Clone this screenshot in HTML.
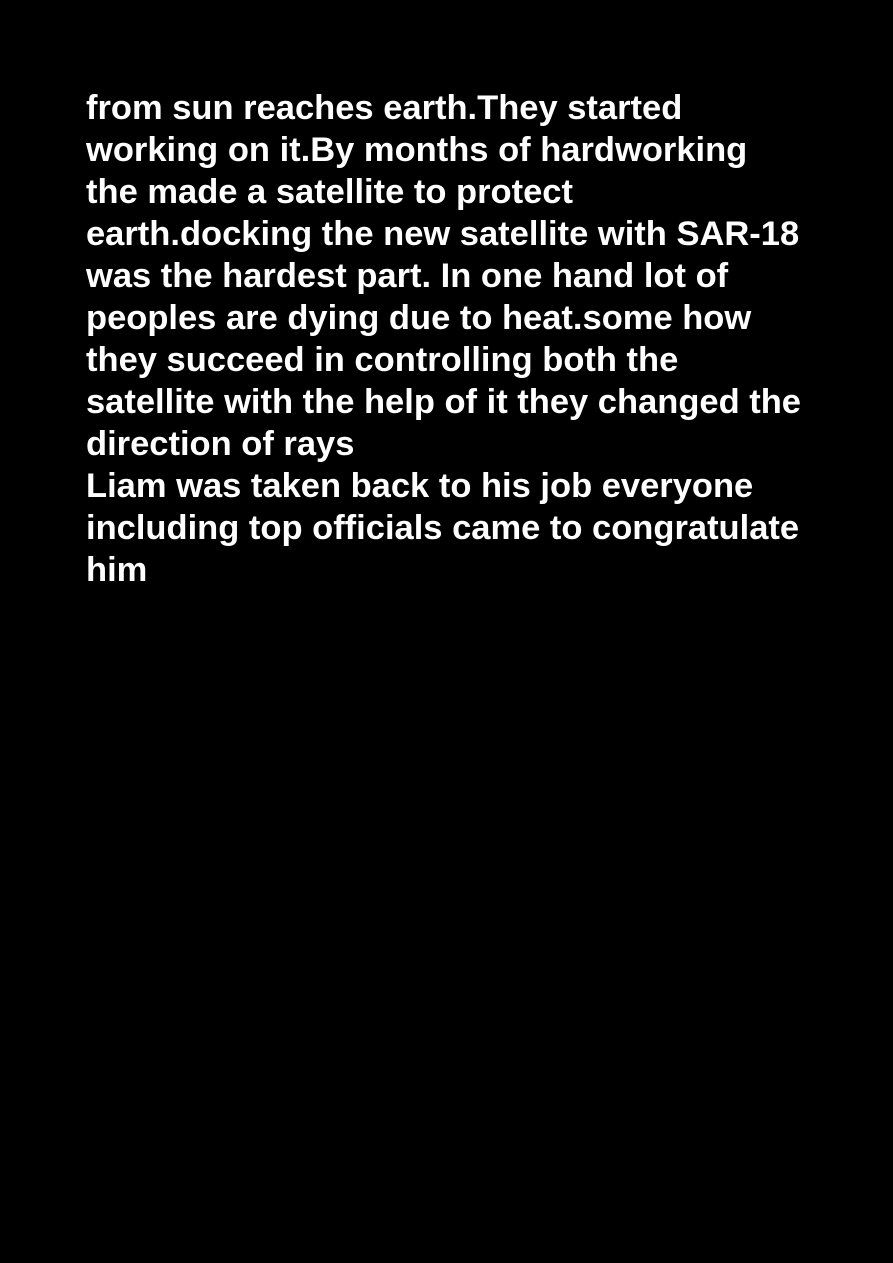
<!DOCTYPE html>
<html><head><meta charset="utf-8"><style>
html,body{margin:0;padding:0;background:#000;}
body{width:893px;height:1263px;overflow:hidden;}
.t{position:absolute;left:86px;top:87px;color:#fff;font-family:"Liberation Sans",Arial,sans-serif;font-weight:bold;font-size:34.5px;line-height:42px;white-space:nowrap;}
</style></head><body>
<div class="t">from sun reaches earth.They started<br>working on it.By months of hardworking<br>the made a satellite to protect<br>earth.docking the new satellite with SAR-18<br>was the hardest part. In one hand lot of<br>peoples are dying due to heat.some how<br>they succeed in controlling both the<br>satellite with the help of it they changed the<br>direction of rays<br>Liam was taken back to his job everyone<br>including top officials came to congratulate<br>him</div>
</body></html>
